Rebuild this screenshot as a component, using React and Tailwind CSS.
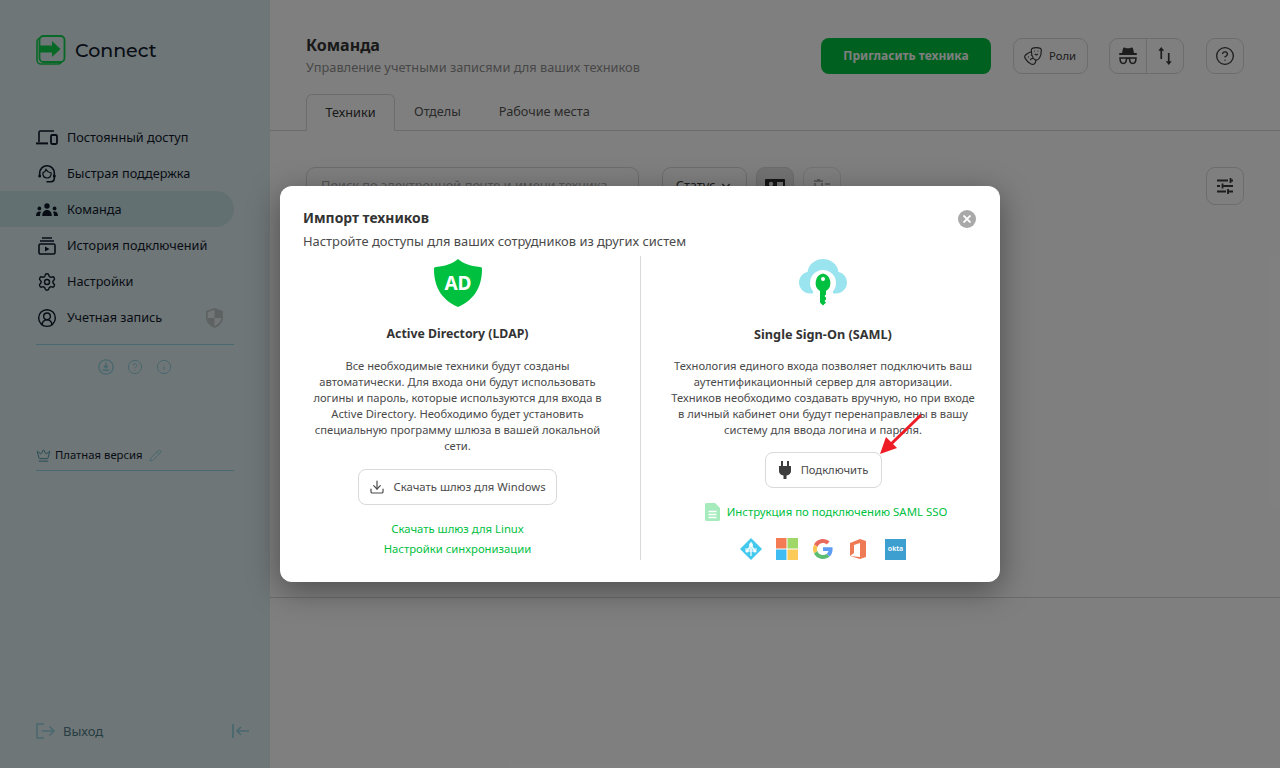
import React from 'react';
import {
  Settings,
  CircleUserRound,
  CircleHelp,
  Info,
  Pencil,
  Crown,
  Download,
  Drama,
  ChevronDown,
} from 'lucide-react';

const IconDevices = () => (
  <svg width="22" height="18" viewBox="0 0 22 18" fill="none" stroke="currentColor" strokeWidth="1.6">
    <path d="M3 13V3.500C3 2.600 3.600 2 4.500 2H18" />
    <path d="M0 14.400H12" strokeWidth="2" />
    <rect x="15" y="6" width="6" height="9" rx="1.2" strokeWidth="1.8" />
  </svg>
);

const IconSupport = () => (
  <svg width="20" height="20" viewBox="0 0 20 20" fill="none" stroke="currentColor" strokeWidth="1.5">
    <path d="M2.700 11V9a7.300 7.300 0 0 1 14.600 0v2" strokeWidth="1.600" />
    <path d="M5.800 9C7.500 8.500 8.500 7 9 5.500 10 7.500 12 8.500 14.200 9 14.200 12 12.500 14 10 14S5.800 12 5.800 9z" strokeWidth="1.200" />
    <path d="M17.300 11v3c0 2.500-1.500 3.700-3.500 3.700H9.500" strokeWidth="1.600" />
    <circle cx="2.700" cy="12" r="1.500" fill="currentColor" stroke="none" />
    <circle cx="17.300" cy="12" r="1.500" fill="currentColor" stroke="none" />
  </svg>
);

const IconTeam = () => (
  <svg width="22" height="14" viewBox="0 0 22 14" fill="currentColor">
    <circle cx="11" cy="3" r="2.700" />
    <path d="M6.200 13c0-3.600 1.800-6 4.800-6s4.800 2.400 4.800 6z" />
    <circle cx="3.400" cy="5.400" r="1.900" />
    <path d="M0 13c0-2.600 1.200-4.400 3.400-4.400.6 0 1.100.1 1.500.4-.6 1.100-.9 2.400-.9 4z" />
    <circle cx="18.600" cy="5.400" r="1.900" />
    <path d="M22 13c0-2.600-1.200-4.400-3.400-4.400-.6 0-1.100.1-1.500.4.6 1.100.9 2.400.9 4z" />
  </svg>
);

const IconHistory = () => (
  <svg width="18" height="18" viewBox="0 0 18 18" fill="none" stroke="currentColor" strokeWidth="1.6">
    <path d="M4 1h10M2 4h14" />
    <rect x="1" y="7" width="16" height="10" rx="1.4" />
    <path d="M7 9.500v5l4.500-2.500z" fill="currentColor" stroke="none" />
  </svg>
);

const IconShieldHalf = () => (
  <svg width="17" height="20" viewBox="0 0 17 20">
    <path d="M8.500 0 17 3v6.500C17 14.500 13 18.500 8.500 20 4 18.500 0 14.500 0 9.500V3z" fill="#bcc5c7" />
    <path d="M8.500 1.800V10H1.700V4.200zM8.500 10h6.800c-.5 3.600-3.400 6.500-6.800 7.900z" fill="#e6ecee" />
  </svg>
);

const IconTrayDown = () => (
  <svg width="16" height="16" viewBox="0 0 16 16" fill="none" stroke="currentColor" strokeWidth="1.300">
    <circle cx="8" cy="8" r="7.200" />
    <path d="M8 3.500v5M5.800 6.800 8 9l2.200-2.200M4.500 11.300h7" strokeWidth="1.500" />
  </svg>
);

const IconLogout = () => (
  <svg width="19" height="16" viewBox="0 0 19 16" fill="none" stroke="currentColor" strokeWidth="1.500">
    <path d="M8 1H1v14h7" />
    <path d="M6 8h12M13.500 3.500 18 8l-4.500 4.500" />
  </svg>
);

const IconCollapse = () => (
  <svg width="18" height="16" viewBox="0 0 18 16" fill="none" stroke="currentColor" strokeWidth="1.500">
    <path d="M1 1v14" strokeWidth="1.800" />
    <path d="M17 8H5M9 4 5 8l4 4" />
  </svg>
);

const IconSpy = () => (
  <svg width="20" height="20" viewBox="0 0 20 20" fill="none">
    <path d="M5 2.500C5.300 1.500 6 1.300 7 1.700c2 .8 4 .8 6 0 1-.4 1.700-.2 2 .8l1 4.500H4z" fill="currentColor" />
    <rect x="1" y="7" width="18" height="2" rx="1" fill="currentColor" />
    <path d="M2 12h6.500c0 3-1 5.500-3.200 5.500S2 15 2 12zM11.500 12H18c0 3-1 5.500-3.300 5.500S11.500 15 11.500 12zM8.500 12.500c1-.5 2-.5 3 0" stroke="currentColor" strokeWidth="1.500" />
  </svg>
);

const IconSort = () => (
  <svg width="14" height="18" viewBox="0 0 14 18" fill="currentColor">
    <path d="M3.200 0 6.200 3.800H4.100V12H2.400V3.800H.3zM10.800 18l-3-3.800h2.100V6h1.700v8.200h2.100z" />
  </svg>
);

const IconSliders = () => (
  <svg width="18" height="18" viewBox="0 0 18 18" fill="none" stroke="currentColor" strokeWidth="1.800">
    <path d="M1 3.500h11M14.500 1v5M15 3.500h2M1 9h3M6.500 6.500v5M7 9h10M1 14.500h9M12 12v5M12.500 14.500H17" />
  </svg>
);

const IconContact = () => (
  <svg width="20" height="14" viewBox="0 0 20 14">
    <rect width="20" height="14" rx="1" fill="#2a2a2a" />
    <circle cx="6" cy="5" r="2.200" fill="#e6e6e6" />
    <path d="M2.500 11.500c0-2.300 1.400-3.500 3.500-3.500s3.500 1.200 3.500 3.500z" fill="#e6e6e6" />
    <rect x="12" y="3" width="6" height="4" fill="#e6e6e6" />
  </svg>
);

const IconTrashList = () => (
  <svg width="18" height="14" viewBox="0 0 18 14" fill="none" stroke="#a8a8a8" strokeWidth="1.500">
    <path d="M1 2h9M4 .8h3M2 4v9h7V4M12 5h5M12 9h4" />
  </svg>
);

const LogoMark = () => (
  <svg width="30" height="30" viewBox="0 0 30 30" fill="none">
    <rect x="1" y="3" width="25" height="26" rx="4" stroke="#10d04c" strokeWidth="1.600" />
    <rect x="3.500" y="1" width="25" height="26" rx="4" fill="#deecf0" stroke="#10d04c" strokeWidth="1.800" />
    <path d="M4 10.500h12V6l8.500 8-8.500 8v-4.500H4z" fill="#10d04c" />
  </svg>
);

const AdShield = () => (
  <svg width="50" height="50" viewBox="0 0 50 50" className="block">
    <path d="M25 1c5 4.500 12 7 22 8 1.500 0 2 .8 2 2 0 16-6 30-24 38C7 41 1 27 1 11c0-1.200.5-2 2-2C13 8 20 5.500 25 1z" fill="#00c13f" />
    <text x="25" y="32" textAnchor="middle" fill="#fff" fontSize="19" fontWeight="700" fontFamily="Noto Sans, sans-serif">AD</text>
  </svg>
);

const CloudKey = () => (
  <svg width="50" height="50" viewBox="0 0 50 50" className="block">
    <path d="M25 1c8 0 14.500 5.500 15.500 13C45.500 15 49 19.500 49 24.500c0 6-5 11-11 11H12C6 35.500 1 30.500 1 24.500c0-5 3.500-9.500 8.500-10.500C10.500 6.500 17 1 25 1z" fill="#9ae4f0" />
    <circle cx="25" cy="25" r="13" fill="#fff" />
    <path d="M15 34h20v8H15z" fill="#fff" />
    <path d="M25 15.500a9 9.500 0 0 1 3 17.500v3.500l-1.500 1.500 1.500 1.500v2l-1.500 1.500 1.500 1.500-3 3-3-3V33a9 9.500 0 0 1 3-17.500z" fill="#00c13f" />
    <circle cx="25" cy="21" r="2" fill="#fff" />
  </svg>
);

const IconPlug = () => (
  <svg width="14" height="18" viewBox="0 0 14 18" fill="#3d3d3d">
    <path d="M3 0h2v5H3zM9 0h2v5H9zM1 5h12v5c0 2.500-1.800 4.300-4.500 4.500V18h-3v-3.500C2.800 14.300 1 12.500 1 10z" />
  </svg>
);

const IconDoc = () => (
  <svg width="15" height="18" viewBox="0 0 15 18">
    <path d="M1.500 0H10l5 5v11.500c0 .8-.7 1.500-1.500 1.500h-12C.7 18 0 17.300 0 16.500v-15C0 .7.700 0 1.500 0z" fill="#a5ebbc" />
    <path d="M3.500 8.500h8M3.500 11.500h8M3.500 14.500h8" stroke="#fff" strokeWidth="1.400" />
  </svg>
);

const LogoAzure = () => (
  <svg width="22" height="22" viewBox="0 0 22 22">
    <path d="M11 0 22 11 11 22 0 11z" fill="#44c9ee" />
    <path d="M11 4v14M5 11h12M11 7l-4 6h8z" stroke="#fff" strokeWidth="1.200" fill="none" />
    <circle cx="11" cy="7" r="2" fill="#fff" />
    <circle cx="7" cy="13" r="1.600" fill="#fff" />
    <circle cx="15" cy="13" r="1.600" fill="#fff" />
  </svg>
);

const LogoMicrosoft = () => (
  <svg width="22" height="22" viewBox="0 0 22 22">
    <rect width="10.500" height="10.500" fill="#f47c54" />
    <rect x="11.500" width="10.500" height="10.500" fill="#9fd866" />
    <rect y="11.500" width="10.500" height="10.500" fill="#3fbdf2" />
    <rect x="11.500" y="11.500" width="10.500" height="10.500" fill="#fcca57" />
  </svg>
);

const LogoGoogle = () => (
  <svg width="20" height="20" viewBox="0 0 48 48">
    <path fill="#ea6a5c" d="M24 9.500c3.500 0 6.700 1.300 9.100 3.500l6.800-6.800C35.800 2.400 30.200 0 24 0 14.600 0 6.500 5.400 2.600 13.200l7.900 6.100C12.400 13.600 17.700 9.500 24 9.500z" />
    <path fill="#5f9cf4" d="M47 24.500c0-1.600-.2-3.200-.4-4.500H24v9h13c-.6 3-2.300 5.500-4.800 7.200l7.600 5.900C44.200 37.900 47 31.800 47 24.500z" />
    <path fill="#f9c74f" d="M10.500 28.700c-.5-1.400-.8-3-.8-4.700s.3-3.300.8-4.700l-7.900-6.100C.9 16.500 0 20.100 0 24s.9 7.500 2.600 10.800z" />
    <path fill="#5cbd73" d="M24 48c6.500 0 11.900-2.100 15.800-5.900l-7.600-5.900c-2.100 1.400-4.900 2.300-8.200 2.300-6.300 0-11.600-4.100-13.500-9.800l-7.900 6.100C6.500 42.600 14.600 48 24 48z" />
  </svg>
);

const LogoOffice = () => (
  <svg width="16" height="20" viewBox="0 0 16 20">
    <path d="M0 4 10 0l6 2v16l-6 2-10-3 10 1V4L4 6v8l-4 3z" fill="#ef7b56" />
  </svg>
);

const LogoOkta = () => (
  <div className="w-[21px] h-[21px] bg-[#3d9fd0] flex items-center justify-center text-[7px] font-semibold text-white">
    okta
  </div>
);

const navItems = [
  { label: 'Постоянный доступ', icon: <IconDevices /> },
  { label: 'Быстрая поддержка', icon: <IconSupport /> },
  { label: 'Команда', icon: <IconTeam />, active: true },
  { label: 'История подключений', icon: <IconHistory /> },
  { label: 'Настройки', icon: <Settings size={20} strokeWidth={1.7} /> },
  { label: 'Учетная запись', icon: <CircleUserRound size={20} strokeWidth={1.7} />, badge: true },
];

const Sidebar = () => (
  <aside className="w-[270px] h-full shrink-0 bg-[#deecf0] flex flex-col pt-[35px] text-[#10192b]">
    <div className="flex items-center gap-[9px] pl-[36px] h-[30px]">
      <LogoMark />
      <span className="font-['Montserrat','Noto_Sans',sans-serif] text-[19px] font-medium leading-none">Connect</span>
    </div>
    <nav className="mt-[54px] w-[234px]">
      {navItems.map((item) => (
        <div
          key={item.label}
          className={`h-[36px] flex items-center pl-[36px] pt-[1px] rounded-r-[18px] ${item.active ? 'bg-[#c6e0e2]' : ''}`}
        >
          <span className="w-[22px] flex justify-center shrink-0">{item.icon}</span>
          <span className="ml-[9px] text-[12.7px]">{item.label}</span>
          {item.badge && (
            <span className="ml-auto mr-[11px]">
              <IconShieldHalf />
            </span>
          )}
        </div>
      ))}
    </nav>
    <div className="ml-[36px] w-[198px] mt-[9px] border-t border-[#8fd0dc]" />
    <div className="ml-[98px] mt-[14px] flex gap-[13px] text-[#8fd0dc]">
      <IconTrayDown />
      <CircleHelp size={16} strokeWidth={1.5} />
      <Info size={16} strokeWidth={1.5} />
    </div>
    <div className="ml-[36px] w-[198px] mt-[72px] pb-[6px] border-b border-[#8fd0dc] flex items-center h-[24px]">
      <Crown size={15} strokeWidth={1.6} className="text-[#4f9aa8]" />
      <span className="ml-[4px] text-[11.300px]">Платная версия</span>
      <Pencil size={13} strokeWidth={1.8} className="ml-[6px] text-[#8fd0dc]" />
    </div>
    <div className="mt-auto mb-[27px] ml-[36px] w-[214px] flex items-center text-[#8fd0dc]">
      <IconLogout />
      <span className="ml-[8px] text-[13px] text-[#4c7a85]">Выход</span>
      <span className="ml-auto">
        <IconCollapse />
      </span>
    </div>
  </aside>
);

const OutlineBox = ({ children, className = '' }) => (
  <div className={`h-[36px] flex items-center justify-center border border-[#d9d9d9] rounded-[9px] ${className}`}>
    {children}
  </div>
);

const MainArea = () => (
  <main className="flex-1 h-full bg-white flex flex-col text-[#3a3a3a]">
    <header className="h-[94px] px-[36px] flex items-start justify-between pt-[35px]">
      <div>
        <h1 className="text-[16px] font-bold leading-[20px] text-[#333]">Команда</h1>
        <p className="text-[12.8px] leading-[20px] mt-[2px] text-[#8f8f8f]">Управление учетными записями для ваших техников</p>
      </div>
      <div className="flex items-center mt-[3px]">
        <div className="w-[170px] h-[36px] rounded-[8px] bg-[#00c13f] text-white text-[12px] font-bold flex items-center justify-center">
          Пригласить техника
        </div>
        <OutlineBox className="w-[75px] ml-[22px] gap-[6px] text-[11.300px] pr-[2px]">
          <Drama size={20} strokeWidth={1.4} />
          <span>Роли</span>
        </OutlineBox>
        <OutlineBox className="w-[75px] ml-[21px] !justify-start">
          <span className="w-[37px] flex justify-center border-r border-[#d9d9d9] h-full items-center">
            <IconSpy />
          </span>
          <span className="flex-1 flex justify-center">
            <IconSort />
          </span>
        </OutlineBox>
        <OutlineBox className="w-[38px] ml-[22px]">
          <CircleHelp size={20} strokeWidth={1.6} />
        </OutlineBox>
      </div>
    </header>
    <div className="h-[37px] border-b border-[#d9d9d9] pl-[36px] flex items-end text-[12.7px]">
      <div className="h-[37px] w-[89px] border border-[#d9d9d9] border-b-white -mb-[1px] rounded-t-[6px] bg-white flex items-center justify-center text-[#333]">
        Техники
      </div>
      <div className="h-[36px] ml-[19px] flex items-center text-[#555]">Отделы</div>
      <div className="h-[36px] ml-[38px] flex items-center text-[#555]">Рабочие места</div>
    </div>
    <div className="mt-[36px] px-[36px] flex items-start h-[38px]">
      <div className="w-[333px] h-[38px] border border-[#d9d9d9] rounded-[9px] flex items-center pl-[14px] text-[12.8px] text-[#aaa]">
        Поиск по электронной почте и имени техника
      </div>
      <div className="w-[85px] h-[38px] ml-[23px] border border-[#d9d9d9] rounded-[9px] flex items-center justify-center gap-[4px] text-[12.8px]">
        Статус
        <ChevronDown size={14} />
      </div>
      <div className="w-[38px] h-[38px] ml-[9px] border border-[#d9d9d9] rounded-[9px] bg-[#e6e6e6] flex items-center justify-center">
        <IconContact />
      </div>
      <div className="w-[38px] h-[38px] ml-[9px] border border-[#e6e6e6] rounded-[9px] flex items-center justify-center">
        <IconTrashList />
      </div>
      <div className="w-[38px] h-[38px] ml-auto border border-[#d9d9d9] rounded-[9px] flex items-center justify-center">
        <IconSliders />
      </div>
    </div>
    <div className="mt-[392px] border-t border-[#d9d9d9]" />
  </main>
);

const ImportModal = () => (
  <div className="relative w-[720px] h-[396px] bg-white rounded-[12px] shadow-[0_8px_32px_rgba(0,0,0,0.4)] px-[23px] pt-[22px] text-[#4a4a4a]">
    <h2 className="text-[13.900px] font-bold leading-[20px] text-[#333]">Импорт техников</h2>
    <p className="text-[12.900px] leading-[20px] mt-[3px]">Настройте доступы для ваших сотрудников из других систем</p>
    <button className="absolute right-[24px] top-[24px] w-[18px] h-[18px] rounded-full bg-[#a9a9a9] flex items-center justify-center">
      <svg width="8" height="8" viewBox="0 0 8 8" stroke="#fff" strokeWidth="1.800">
        <path d="M.5.5l7 7M7.500.5l-7 7" />
      </svg>
    </button>
    <div className="flex mt-[5px] h-[304px]">
      <section className="w-[338px] pr-[28px] border-r border-[#d9d9d9] flex flex-col items-center">
        <div className="mt-[2px]"><AdShield /></div>
        <h3 className="mt-[16px] text-[12.300px] font-bold leading-[20px] text-[#333]">Active Directory (LDAP)</h3>
        <p className="mt-[14px] text-[11.200px] leading-[16px] text-center whitespace-nowrap">
          Все необходимые техники будут созданы<br />
          автоматически. Для входа они будут использовать<br />
          логины и пароль, которые используются для входа в<br />
          Active Directory. Необходимо будет установить<br />
          специальную программу шлюза в вашей локальной<br />
          сети.
        </p>
        <div className="mt-[15px] w-[199px] h-[36px] shrink-0 border border-[#d9d9d9] rounded-[8px] flex items-center justify-center gap-[8px] text-[11.300px]">
          <Download size={16} strokeWidth={1.8} />
          Скачать шлюз для Windows
        </div>
        <a className="mt-[14px] text-[11.300px] leading-[20px] text-[#00c13f]">Скачать шлюз для Linux</a>
        <a className="text-[11.300px] leading-[20px] text-[#00c13f]">Настройки синхронизации</a>
      </section>
      <section className="flex-1 pl-[28px] flex flex-col items-center">
        <div className="mt-[2px]"><CloudKey /></div>
        <h3 className="mt-[16px] text-[12.700px] font-bold leading-[20px] text-[#333]">Single Sign-On (SAML)</h3>
        <p className="mt-[14px] text-[11.200px] leading-[16px] text-center whitespace-nowrap">
          Технология единого входа позволяет подключить ваш<br />
          аутентификационный сервер для авторизации.<br />
          Техников необходимо создавать вручную, но при входе<br />
          в личный кабинет они будут перенаправлены в вашу<br />
          систему для ввода логина и пароля.
        </p>
        <div className="mt-[14px] w-[117px] h-[36px] shrink-0 border border-[#d9d9d9] rounded-[8px] flex items-center justify-center gap-[9px] text-[11.200px]">
          <IconPlug />
          Подключить
        </div>
        <div className="mt-[14px] ml-[6px] flex items-center gap-[7px] text-[11.400px] leading-[20px] text-[#00c13f]">
          <IconDoc />
          Инструкция по подключению SAML SSO
        </div>
        <div className="mt-[16px] flex items-center">
          <LogoAzure />
          <span className="ml-[14px]"><LogoMicrosoft /></span>
          <span className="ml-[15px]"><LogoGoogle /></span>
          <span className="ml-[17px]"><LogoOffice /></span>
          <span className="ml-[19px]"><LogoOkta /></span>
        </div>
      </section>
    </div>
    {/* red arrow pointing at the connect button */}
    <svg className="absolute left-[595px] top-[225px]" width="50" height="48" viewBox="0 0 50 48" fill="none">
      <path d="M46 4 14 35" stroke="#ee1c25" strokeWidth="3" />
      <path d="M5 43 11 26 22 37z" fill="#ee1c25" />
    </svg>
  </div>
);

export default function App() {
  return (
    <div className="relative w-[1280px] h-[768px] overflow-hidden flex font-['Noto_Sans',sans-serif]">
      <Sidebar />
      <MainArea />
      <div className="absolute inset-0 bg-black/50 flex justify-center pt-[186px]">
        <ImportModal />
      </div>
    </div>
  );
}
